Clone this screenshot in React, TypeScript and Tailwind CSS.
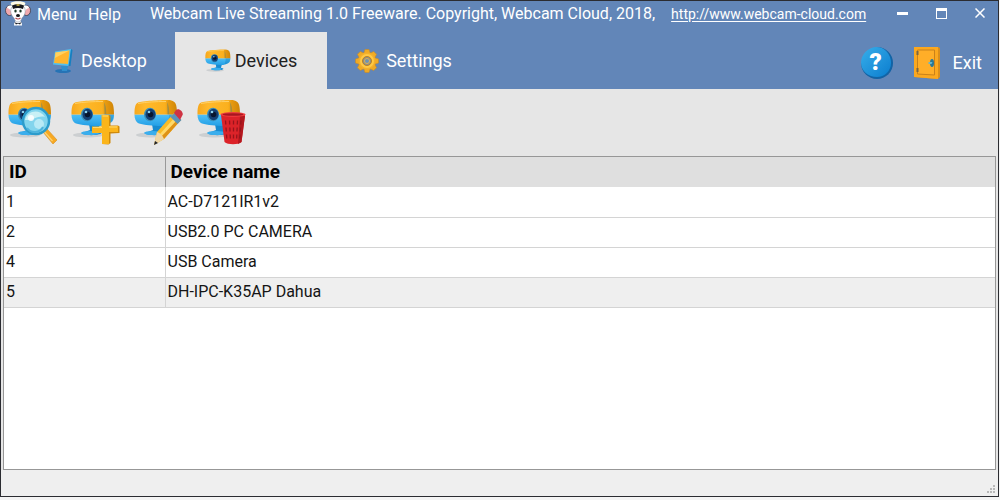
import { useId, useState } from "react";

type Device = {
  id: number;
  name: string;
};

const devices: Device[] = [
  { id: 1, name: "AC-D7121IR1v2" },
  { id: 2, name: "USB2.0 PC CAMERA" },
  { id: 4, name: "USB Camera" },
  { id: 5, name: "DH-IPC-K35AP Dahua" },
];

const MouseLogo = () => (
  <svg viewBox="0 0 26 25" className="h-[25px] w-[26px]" aria-hidden="true">
    <ellipse cx="4.500" cy="9.500" rx="4" ry="5" fill="#f0a9ae" stroke="#2b2f3a" strokeWidth=".7" />
    <ellipse cx="21.500" cy="9.500" rx="4" ry="5" fill="#f0a9ae" stroke="#2b2f3a" strokeWidth=".7" />
    <path d="M2 7c1-3 4-3 6-1l-1 7c-1-4-3-6-5-6zM24 7c-1-3-4-3-6-1l1 7c1-4 3-6 5-6z" fill="#fff" />
    <path d="M9 24.500c0-3 1-5 4-5s4 2 4 5z" fill="#fff" />
    <path d="M9 20.500c2 2 6 2 8 0l-2 3-2-1-2 1z" fill="#20242c" />
    <path d="M6 8c0-5 14-5 14 0 1 4-1 7-3 9-1 3-2 4-4 4s-3-1-4-4c-2-2-4-5-3-9z" fill="#fff" stroke="#7e8799" strokeWidth=".5" />
    <path d="M5.500 2C8-.500 18-.500 20.500 2L19 5.500C15 4 11 4 7 5.500z" fill="#fffbe6" />
    <path d="M7 4.500c4-2 8-2 12 0L18 8c-3-1.500-7-1.500-10 0z" fill="#17181c" />
    <path d="M11.500 4h3" stroke="#d8c04c" strokeWidth="1.500" />
    <ellipse cx="10.500" cy="10" rx="1.200" ry="1.600" fill="#1d3b2a" />
    <ellipse cx="15.500" cy="10" rx="1.200" ry="1.600" fill="#1d3b2a" />
    <ellipse cx="13" cy="14.500" rx="2" ry="1.500" fill="#17181c" />
    <path d="M10.500 17q2.500 2 5 0" fill="none" stroke="#b2454c" strokeWidth="1.200" />
  </svg>
);

/* Camera artwork shared by the tab and the toolbar, drawn on a 50x48 grid */
const CameraBody = () => {
  const id = useId();
  return (
    <>
      <defs>
        <linearGradient id={`${id}y`} x1="0" y1="0" x2="1" y2="0">
          <stop offset="0" stopColor="#f6a71d" />
          <stop offset="0.250" stopColor="#ffb92b" />
          <stop offset="0.720" stopColor="#fbb01e" />
          <stop offset="0.800" stopColor="#e79a10" />
          <stop offset="1" stopColor="#cf8508" />
        </linearGradient>
        <linearGradient id={`${id}b`} x1="0" y1="0" x2="0" y2="1">
          <stop offset="0" stopColor="#50c0f5" />
          <stop offset="1" stopColor="#239fe6" />
        </linearGradient>
      </defs>
      <ellipse cx="17" cy="36" rx="15" ry="2.500" fill="#9aa3aa" opacity=".35" />
      <path d="M18 25h11l-2 7 4 1c1 4-20 4-20 1l8-3z" fill="#178bd0" />
      <ellipse cx="19" cy="34" rx="9" ry="2" fill="#3aaeed" />
      <path d="M.5 15.500H43c0 5-1 7-4 8.500-4 2-7 3-11 3C19 27 10 26 5 24.500c-3-1-4.500-5-4.500-9z" fill={`url(#${id}b)`} />
      <path d="M.5 15.500C.5 9 1 5 4 3.500 8 2 26 1 34 1c5 0 8 2 8.500 7 .4 3 .5 5 .5 7.500H33L.5 15.500z" fill={`url(#${id}y)`} />
      <path d="M33 3c3 5 3 17 0 23 7-1 9-4 10-10.500H33.500z" fill="#0a6cab" opacity=".3" />
      <path d="M4 4.500C12 3 22 2.500 32 2.500" fill="none" stroke="#ffd067" strokeWidth="1" />
      <ellipse cx="16" cy="15.500" rx="6" ry="6.800" fill="#3a8fb9" />
      <ellipse cx="16.500" cy="15.500" rx="5" ry="5.800" fill="#143f74" />
      <circle cx="16.500" cy="15.500" r="2.800" fill="#08152f" />
      <circle cx="15" cy="13" r="1.300" fill="#8bd0ed" />
    </>
  );
};

const SearchOverlay = () => (
  <>
    <path d="M35 33l4-3 10 11-4 4z" fill="#f8a922" stroke="#d9952a" strokeWidth=".7" />
    <path d="M36.500 33l8 9" stroke="#ffd36f" strokeWidth="1.200" />
    <circle cx="28" cy="22" r="13" fill="#83d5ed" stroke="#2c9ccb" strokeWidth="2.500" />
    <path d="M17 21c2-9 14-12 20-3-7-2-12 4-20 3z" fill="#c8f0f5" />
    <circle cx="31" cy="25" r="5" fill="#c6eff8" opacity=".8" />
    <circle cx="23" cy="19" r="3" fill="#fff" opacity=".85" />
    <path d="M19 29c4 6 13 5 16-1" fill="none" stroke="#4cb3dd" strokeWidth="2" />
  </>
);

const PlusOverlay = () => (
  <>
    <path d="M31 16h7l1.500 1v9.500H47l1.500 1V34l-9 .5V44l-2 1.500L31 45z" fill="#cf8a0c" />
    <path d="M30.500 16H38v11h9v6h-9v12h-7V34H21v-6.500h9.500z" fill="#fbb51b" />
    <path d="M31.500 17H37M22 28.500h9M38 28h8" stroke="#ffd96c" strokeWidth="1" />
  </>
);

const PencilOverlay = () => (
  <>
    <path d="M20 46l3-13 17-19 7 7-17 19z" fill="#f8bb26" />
    <path d="M26 35L42 17l3 3-17 18z" fill="#ffd968" />
    <path d="M30 40l17-19-2-2-18 19z" fill="#df9215" />
    <path d="M20 46l3-13c3 1 6 4 7 7z" fill="#efd6a4" />
    <path d="M20 46l1-4 3 2z" fill="#20242a" />
    <path d="M36.500 18l4-4 7 7-4 4z" fill="#5a93ba" />
    <path d="M40 14l2-3c3-3 9 3 6 6l-2 4z" fill="#cf3343" />
  </>
);

const TrashOverlay = () => (
  <>
    <path d="M24 16h24l-3.500 27c-3 3-14 3-17 0z" fill="#dc2329" />
    <path d="M43 17h5l-3.500 26-3.500 2z" fill="#b3181f" />
    <ellipse cx="36" cy="15.500" rx="12.500" ry="2.500" fill="#ee3b3f" />
    <ellipse cx="36" cy="15.500" rx="10.500" ry="1.300" fill="#a91720" />
    <path d="M28.500 21.500L30 42M32.500 21.500l1 21M36.500 21.500v21M40.500 21.500l-1 21M44 21.500L42.500 42" stroke="#97141b" strokeWidth="1.300" strokeDasharray="4 3" />
  </>
);

const DesktopIcon = () => (
  <svg viewBox="0 0 24 26" className="h-[26px] w-6" aria-hidden="true">
    <ellipse cx="12" cy="23" rx="8" ry="2" fill="#2673b5" />
    <path d="M10 18h7l-1 5h-5z" fill="#318fce" />
    <path d="M4 3.500L20 1l-1.500 17L2 16.500z" fill="#52c0ee" />
    <path d="M20 1l1.500 1-2 16h-2z" fill="#1580c1" />
    <path d="M4.500 4.500L18.500 2.500 17 16 3 15z" fill="#ffb52d" />
    <path d="M4.500 4.500l14-2L3.800 10z" fill="#ffd160" />
  </svg>
);

const teeth = [0, 45, 90, 135, 180, 225, 270, 315];

const GearIcon = () => (
  <svg viewBox="0 0 26 26" className="h-[26px] w-[26px]" aria-hidden="true">
    <g fill="#efaa24" stroke="#c48a2a" strokeWidth=".6">
      {teeth.map((angle) => (
        <path key={angle} d="M9.500 6l1.500-4.500h4L16.500 6z" transform={`rotate(${angle} 13 13)`} />
      ))}
    </g>
    <circle cx="13" cy="13" r="8.500" fill="#f3b02c" />
    <circle cx="13" cy="13" r="7" fill="#ffc944" />
    <circle cx="13" cy="13" r="4.500" fill="#8c9089" stroke="#bd8222" />
    <circle cx="13" cy="13" r="2.500" fill="#6b93b8" stroke="#e3b04b" />
  </svg>
);

const HelpIcon = () => (
  <span className="flex size-8 items-center justify-center rounded-full border-r-2 border-b-2 border-[#1263a5] bg-linear-to-br from-[#36aeea] to-[#087dce] text-2xl leading-none font-black text-white">
    ?
  </span>
);

const DoorIcon = () => (
  <svg viewBox="0 0 28 34" className="h-[34px] w-7" aria-hidden="true">
    <path d="M1 1h24l2 1v29l-2 2-24-2z" fill="#d98e1c" />
    <path d="M1 1h24v32L1 31z" fill="#fba81f" />
    <path d="M4.500 4h17v25l-17-1z" fill="#ffae28" stroke="#c9811a" />
    <path d="M4.500 5v4M4.500 22v4" stroke="#7b6541" strokeWidth="2" />
    <ellipse cx="19" cy="17" rx="2" ry="4" fill="#28789a" />
    <path d="M15.500 16h4l-1 2h-3z" fill="#64b7ce" />
  </svg>
);

const tabs = [
  { label: "Desktop", icon: <DesktopIcon /> },
  {
    label: "Devices",
    icon: (
      <svg viewBox="0 0 44 39" className="h-[23px] w-[26px]" aria-hidden="true">
        <CameraBody />
      </svg>
    ),
  },
  { label: "Settings", icon: <GearIcon /> },
];

const tools = [
  { label: "Find devices", overlay: <SearchOverlay /> },
  { label: "Add device", overlay: <PlusOverlay /> },
  { label: "Edit device", overlay: <PencilOverlay /> },
  { label: "Delete device", overlay: <TrashOverlay /> },
];

const TitleBar = () => (
  <header className="flex h-[31px] items-start text-white">
    <div className="pl-1">
      <MouseLogo />
    </div>
    <nav className="flex gap-[11px] pt-[3px] pl-[6px] text-base leading-[22px]">
      <button type="button">Menu</button>
      <button type="button">Help</button>
    </nav>
    <p className="flex items-baseline gap-4 pt-[2px] pl-[29px] text-base leading-[22px] whitespace-nowrap">
      <span>Webcam Live Streaming 1.0 Freeware. Copyright, Webcam Cloud, 2018,</span>
      <a href="http://www.webcam-cloud.com" className="text-sm underline underline-offset-2">
        http://www.webcam-cloud.com
      </a>
    </p>
    <div className="ml-auto flex gap-[23px] pt-1 pr-[10px]">
      <button type="button" aria-label="Minimize" className="flex size-4 items-center justify-center">
        <span className="h-[3px] w-[11px] bg-white" />
      </button>
      <button type="button" aria-label="Maximize" className="flex size-4 items-center justify-center">
        <span className="size-[11px] border border-t-[3px] border-white" />
      </button>
      <button type="button" aria-label="Close" className="flex size-4 items-center justify-center">
        <svg viewBox="0 0 10 10" className="size-[10px]" aria-hidden="true">
          <path d="M.5.500l9 9M9.500.500l-9 9" stroke="#fff" strokeWidth="1.500" />
        </svg>
      </button>
    </div>
  </header>
);

export default function App() {
  const [activeTab, setActiveTab] = useState("Devices");
  const [selected, setSelected] = useState(5);

  return (
    <div className="h-screen bg-[#f4f4f4] pr-[1px] pb-[3px] font-[Roboto,sans-serif]">
      <main className="flex h-full flex-col border border-[#2b2c31] bg-[#e6e6e6]">
        <div className="bg-[#6286b8]">
          <TitleBar />
          <div className="flex h-[57px] text-lg text-white">
            <div role="tablist" className="flex pl-[22px]">
              {tabs.map((tab) => (
                <button
                  key={tab.label}
                  type="button"
                  role="tab"
                  aria-selected={activeTab === tab.label}
                  onClick={() => setActiveTab(tab.label)}
                  className={
                    activeTab === tab.label
                      ? "flex w-[152px] items-center justify-center gap-1 bg-[#e6e6e6] text-[#202020]"
                      : "flex w-[152px] items-center justify-center gap-[6px]"
                  }
                >
                  {tab.icon}
                  {tab.label}
                </button>
              ))}
            </div>
            <div className="ml-auto flex items-center gap-5 pt-1 pr-4">
              <button type="button" aria-label="Help">
                <HelpIcon />
              </button>
              <button type="button" className="flex items-center gap-3">
                <DoorIcon />
                Exit
              </button>
            </div>
          </div>
        </div>

        <div role="toolbar" aria-label="Devices" className="flex h-[67px] gap-[13px] pt-[10px] pl-[7px]">
          {tools.map((tool) => (
            <button key={tool.label} type="button" aria-label={tool.label} className="h-12 w-[50px]">
              <svg viewBox="0 0 50 48" className="h-12 w-[50px]" aria-hidden="true">
                <CameraBody />
                {tool.overlay}
              </svg>
            </button>
          ))}
        </div>

        <div className="mx-[2px] min-h-0 flex-1 overflow-auto border border-[#979797] bg-white">
          <table className="w-full table-fixed border-collapse text-left text-base leading-5 text-[#151515]">
            <thead>
              <tr className="h-[30px] bg-[#dfdfdf] text-[19px] text-black">
                <th className="w-[161px] border-r border-[#999] px-[5px] py-0 font-bold">ID</th>
                <th className="px-[5px] py-0 font-bold">Device name</th>
              </tr>
            </thead>
            <tbody>
              {devices.map((device) => (
                <tr
                  key={device.id}
                  onClick={() => setSelected(device.id)}
                  className={
                    device.id === selected
                      ? "h-[30px] border-b border-[#d4d4d4] bg-[#efefef]"
                      : "h-[30px] border-b border-[#d4d4d4]"
                  }
                >
                  <td className="border-r border-[#d4d4d4] px-[2px] py-0">{device.id}</td>
                  <td className="px-[2px] py-0">{device.name}</td>
                </tr>
              ))}
            </tbody>
          </table>
        </div>

        <footer className="flex h-[26px] items-end justify-end bg-[#efefef] p-[2px]">
          <svg viewBox="0 0 9 9" className="size-[9px]" aria-hidden="true">
            <path d="M6 0h2v2H6zM3 3h2v2H3zM6 3h2v2H6zM0 6h2v2H0zM3 6h2v2H3zM6 6h2v2H6z" fill="#b8b8b8" />
          </svg>
        </footer>
      </main>
    </div>
  );
}
